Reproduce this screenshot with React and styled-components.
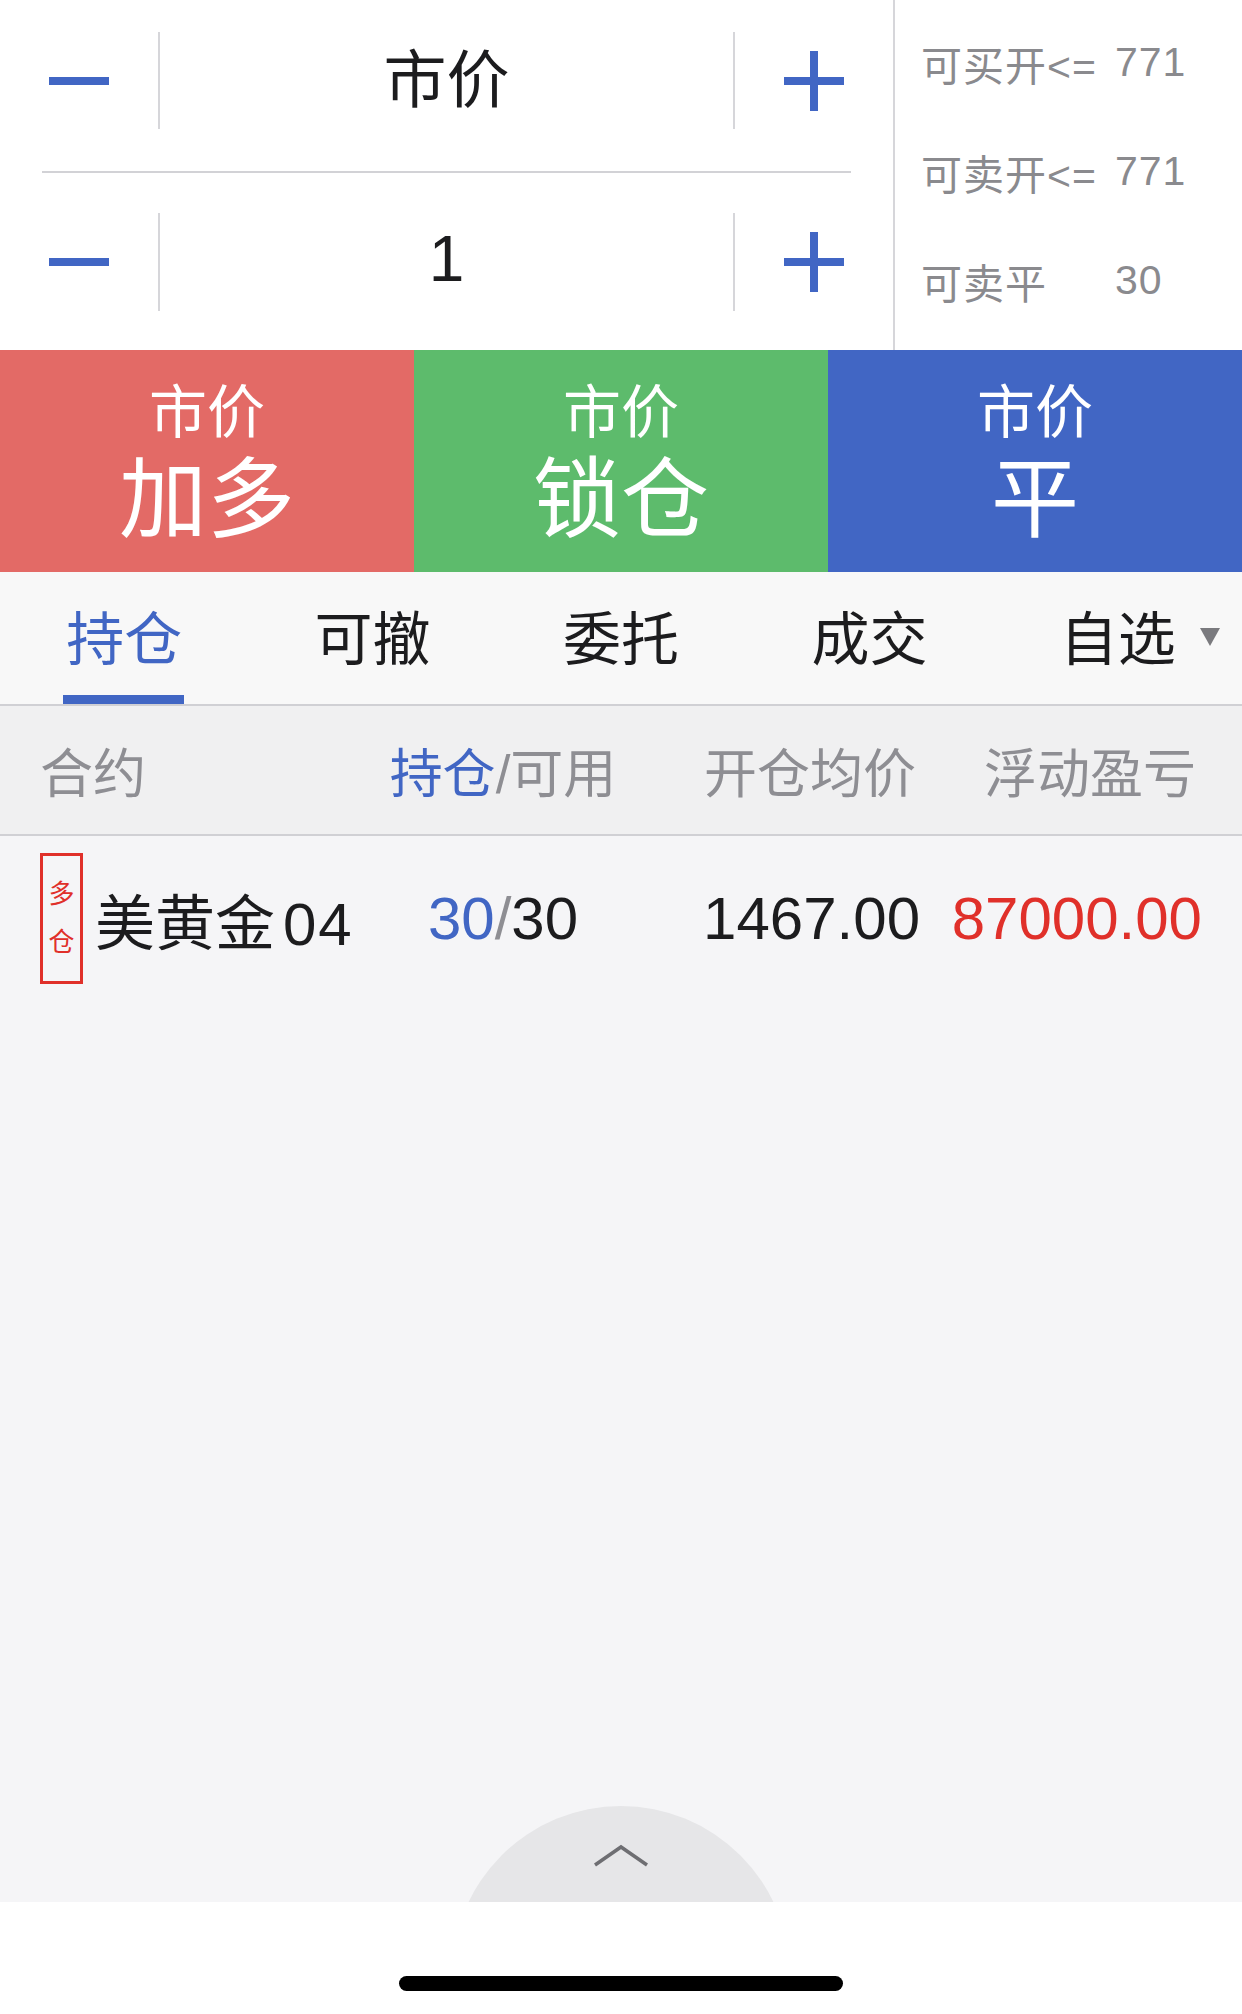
import React from "react"
import styled, { createGlobalStyle } from "styled-components"

const GlobalStyle = createGlobalStyle`
  html, body {
    margin: 0;
    padding: 0;
    background: #ffffff;
  }
  body {
    font-family: "Liberation Sans", "Noto Sans CJK SC", sans-serif;
  }
  * {
    box-sizing: border-box;
  }
`

const BLUE = "#4166c4"
const RED = "#e0302a"

const Page = styled.div`
  width: 1242px;
  height: 2014px;
  display: flex;
  flex-direction: column;
  background: #f5f5f7;
  overflow: hidden;
`

const TopPanel = styled.div`
  display: flex;
  height: 350px;
  background: #ffffff;
`

const Stepper = styled.div`
  width: 893px;
  padding-top: 32px;
  display: flex;
  flex-direction: column;
`

const StepRow = styled.div`
  display: flex;
  align-items: stretch;
  height: ${(p) => p.$h}px;
`

const StepButton = styled.div`
  width: 160px;
  display: flex;
  align-items: center;
  justify-content: center;
  border-left: ${(p) => (p.$side === "right" ? "2px solid #d6d6da" : "none")};
  border-right: ${(p) => (p.$side === "left" ? "2px solid #d6d6da" : "none")};
`

const StepValue = styled.div`
  flex: 1;
  display: flex;
  align-items: center;
  justify-content: center;
  font-size: ${(p) => p.$size}px;
  padding-bottom: ${(p) => p.$lift}px;
  color: #1c1c1e;
`

const Rule = styled.div`
  height: 2px;
  margin: 42px 42px 40px;
  background: #d2d2d6;
`

const Info = styled.div`
  flex: 1;
  border-left: 2px solid #d6d6da;
  padding: 8px 0 0 26px;
  display: grid;
  grid-template-columns: 194px auto;
  grid-auto-rows: 109px;
  align-items: center;
  font-size: 41px;
  letter-spacing: 1px;
  color: #8a8a8e;
`

const Actions = styled.div`
  display: flex;
  height: 222px;
`

const ActionButton = styled.div`
  flex: 1;
  background: ${(p) => p.$bg};
  color: #ffffff;
  display: flex;
  flex-direction: column;
  align-items: center;
  justify-content: center;
`

const ActionSmall = styled.div`
  font-size: 58px;
  line-height: 70px;
  margin-top: 6px;
`

const ActionBig = styled.div`
  font-size: 88px;
  line-height: 100px;
  margin-top: 2px;
`

const Tabs = styled.div`
  display: flex;
  height: 134px;
  background: #f8f8f8;
  border-bottom: 2px solid #d0d0d4;
`

const Tab = styled.div`
  flex: 1;
  position: relative;
  display: flex;
  align-items: center;
  justify-content: center;
  font-size: 58px;
  padding-bottom: 6px;
  color: ${(p) => (p.$active ? BLUE : "#1c1c1e")};
`

const TabBar = styled.div`
  position: absolute;
  bottom: 0;
  left: 50%;
  width: 121px;
  margin-left: -61px;
  height: 9px;
  background: ${BLUE};
`

const Caret = styled.span`
  position: absolute;
  right: 22px;
  top: 56px;
  width: 0;
  height: 0;
  border-left: 10px solid transparent;
  border-right: 10px solid transparent;
  border-top: 18px solid #7a7a7e;
`

const Grid = styled.div`
  display: grid;
  grid-template-columns: 340px 246px 290px 1fr;
  align-items: center;
  padding: 0 46px 0 40px;
`

const HeaderRow = styled(Grid)`
  height: 130px;
  background: #f0f0f1;
  border-bottom: 2px solid #d0d0d4;
  font-size: 53px;
  color: #8e8e93;
`

const HeadCell = styled.div`
  text-align: ${(p) => p.$align || "left"};
  white-space: nowrap;
`

const Blue = styled.span`
  color: ${BLUE};
`

const DataRow = styled(Grid)`
  height: 164px;
  font-size: 60px;
  color: #1c1c1e;
`

const NameCell = styled.div`
  display: flex;
  align-items: center;
  gap: 12px;
`

const Code = styled.span`
  margin-left: 8px;
  letter-spacing: 2px;
`

const Badge = styled.div`
  width: 43px;
  height: 131px;
  border: 3px solid ${RED};
  color: ${RED};
  font-size: 26px;
  line-height: 1;
  display: flex;
  flex-direction: column;
  align-items: center;
  justify-content: center;
  gap: 22px;
`

const Cell = styled.div`
  text-align: ${(p) => p.$align || "left"};
  color: ${(p) => p.$color || "inherit"};
  white-space: nowrap;
  margin-right: ${(p) => p.$shift || 0}px;
`

const Slash = styled.span`
  color: #8e8e93;
`

const Fill = styled.div`
  flex: 1;
  display: flex;
  flex-direction: column;
  justify-content: flex-end;
  align-items: center;
`

const Pull = styled.div`
  width: 340px;
  height: 96px;
  overflow: hidden;
  display: flex;
  justify-content: center;
`

const PullDisc = styled.div`
  width: 338px;
  height: 338px;
  flex-shrink: 0;
  border-radius: 50%;
  background: #e6e6e8;
  display: flex;
  justify-content: center;
  padding-top: 38px;
`

const HomeArea = styled.div`
  height: 112px;
  background: #ffffff;
  display: flex;
  justify-content: center;
  padding-top: 74px;
`

const HomeBar = styled.div`
  width: 444px;
  height: 15px;
  border-radius: 8px;
  background: #000000;
`

const Minus = () => (
  <svg width="60" height="60" viewBox="0 0 60 60">
    <rect x="0" y="26" width="60" height="8" fill={BLUE} />
  </svg>
)

const Plus = () => (
  <svg width="60" height="60" viewBox="0 0 60 60">
    <rect x="0" y="26" width="60" height="8" fill={BLUE} />
    <rect x="26" y="0" width="8" height="60" fill={BLUE} />
  </svg>
)

const Chevron = () => (
  <svg width="56" height="24" viewBox="0 0 56 24">
    <polyline
      points="2,21 28,3 54,21"
      fill="none"
      stroke="#6e6e72"
      strokeWidth="3.5"
    />
  </svg>
)

const tabs = ["持仓", "可撤", "委托", "成交", "自选"]

const App = () => {
  return (
    <>
      <GlobalStyle />
      <Page>
        <TopPanel>
          <Stepper>
            <StepRow $h={97}>
              <StepButton $side="left">
                <Minus />
              </StepButton>
              <StepValue $size={63} $lift={12}>
                市价
              </StepValue>
              <StepButton $side="right">
                <Plus />
              </StepButton>
            </StepRow>
            <Rule />
            <StepRow $h={98}>
              <StepButton $side="left">
                <Minus />
              </StepButton>
              <StepValue $size={64} $lift={6}>
                1
              </StepValue>
              <StepButton $side="right">
                <Plus />
              </StepButton>
            </StepRow>
          </Stepper>
          <Info>
            <span>可买开&lt;=</span>
            <span>771</span>
            <span>可卖开&lt;=</span>
            <span>771</span>
            <span>可卖平</span>
            <span>30</span>
          </Info>
        </TopPanel>

        <Actions>
          <ActionButton $bg="#e36a66">
            <ActionSmall>市价</ActionSmall>
            <ActionBig>加多</ActionBig>
          </ActionButton>
          <ActionButton $bg="#5dbb6c">
            <ActionSmall>市价</ActionSmall>
            <ActionBig>锁仓</ActionBig>
          </ActionButton>
          <ActionButton $bg="#4166c4">
            <ActionSmall>市价</ActionSmall>
            <ActionBig>平</ActionBig>
          </ActionButton>
        </Actions>

        <Tabs>
          {tabs.map((t, i) => (
            <Tab key={t} $active={i === 0}>
              {t}
              {i === 0 && <TabBar />}
              {i === tabs.length - 1 && <Caret />}
            </Tab>
          ))}
        </Tabs>

        <HeaderRow>
          <HeadCell>合约</HeadCell>
          <HeadCell $align="center">
            <Blue>持仓</Blue>/可用
          </HeadCell>
          <HeadCell $align="right">开仓均价</HeadCell>
          <HeadCell $align="right">浮动盈亏</HeadCell>
        </HeaderRow>

        <DataRow>
          <NameCell>
            <Badge>
              <span>多</span>
              <span>仓</span>
            </Badge>
            <span>
              美黄金<Code>04</Code>
            </span>
          </NameCell>
          <Cell $align="center">
            <Blue>30</Blue>
            <Slash>/</Slash>30
          </Cell>
          <Cell $align="right" $shift={-4}>
            1467.00
          </Cell>
          <Cell $align="right" $color={RED} $shift={-6}>
            87000.00
          </Cell>
        </DataRow>

        <Fill>
          <Pull>
            <PullDisc>
              <Chevron />
            </PullDisc>
          </Pull>
        </Fill>

        <HomeArea>
          <HomeBar />
        </HomeArea>
      </Page>
    </>
  )
}

export default App
